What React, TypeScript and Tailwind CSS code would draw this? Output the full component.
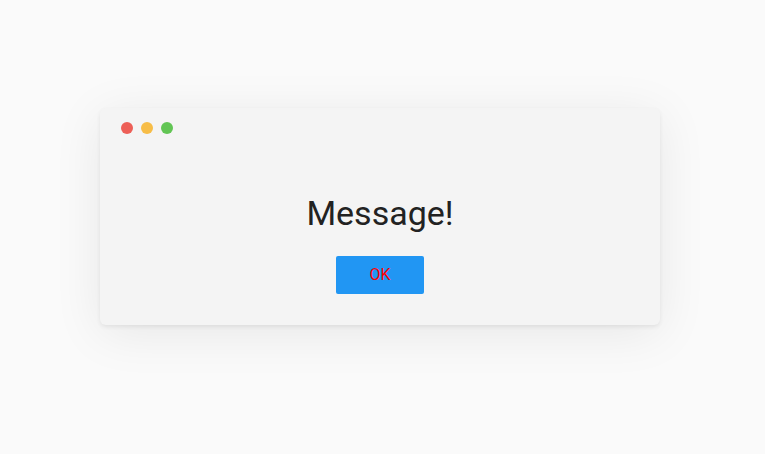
export default function App() {
  return (
    <div className="min-h-[454px] w-full bg-[#fafafa] pt-[108px] pl-[100px]" style={{ fontFamily: 'Roboto, "Liberation Sans", sans-serif' }}>
      <div className="w-[560px] h-[217px] rounded-[6px] bg-[#f4f4f4] shadow-[0_2px_4px_rgba(0,0,0,0.07),0_8px_50px_rgba(0,0,0,0.08)] flex flex-col">
        <div className="flex gap-[8px] pl-[21px] pt-[14px]">
          <span className="w-[12px] h-[12px] rounded-full bg-[#ed5f57]" />
          <span className="w-[12px] h-[12px] rounded-full bg-[#f7bd47]" />
          <span className="w-[12px] h-[12px] rounded-full bg-[#62c554]" />
        </div>
        <div className="flex flex-col items-center mt-[58px]">
          <div className="text-[34px] leading-[42px] text-[#222222]">Message!</div>
          <button className="mt-[22px] w-[88px] h-[38px] bg-[#2196f3] rounded-[2px] text-[16px] text-[#ff0000]">OK</button>
        </div>
      </div>
    </div>
  );
}
